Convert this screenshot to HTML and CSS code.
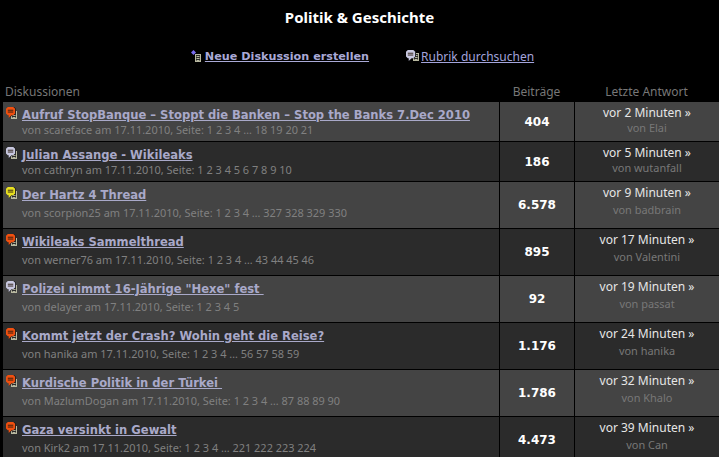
FILE: index.html
```html
<!DOCTYPE html>
<html lang="de">
<head>
    <meta charset="UTF-8">
    <title>Politik &amp; Geschichte</title>
    <link rel="stylesheet" href="styles.css">
</head>
<body>
<svg class="defs" width="0" height="0">
    <defs>
        <symbol id="doc" viewBox="0 0 6 8">
            <rect x="0.5" y="0.5" width="5" height="7" fill="#2a2a2a" stroke="#b8b8a0"/>
            <path d="M1.500 2.500h3M1.500 4.500h3M1.500 6.500h3" stroke="#b8b8a0"/>
        </symbol>
        <symbol id="bubble" viewBox="0 0 11 12">
            <path d="M3 0h6l2 2v5L9 9H7l-3 3V9H3L1 7V2z" fill="#1c1c1c"/>
            <path d="M2 0h6l2 2v5L8 9H6l-3 3V9H2L0 7V2z" fill="currentColor"/>
            <path d="M2 3.500h6M2 5.500h6" stroke="#2a1a10"/>
        </symbol>
    </defs>
</svg>

<h1 class="title">Politik &amp; Geschichte</h1>

<div class="actions">
    <div class="action">
        <svg class="action-icon" width="15" height="15" viewBox="0 0 15 15">
            <path d="M3.500 1L6 3.500 3.500 6 1 3.500z" fill="#7a6cf0"/>
            <use href="#doc" x="5" y="5" width="6" height="8"/>
        </svg>
        <a class="action-link new" href="#">Neue Diskussion erstellen</a>
    </div>
    <div class="action">
        <svg class="action-icon" width="15" height="15" viewBox="0 0 15 15">
            <use href="#doc" x="7" y="4" width="6" height="8"/>
            <use class="grey" href="#bubble" x="0" y="1" width="10" height="11"/>
        </svg>
        <a class="action-link" href="#">Rubrik durchsuchen</a>
    </div>
</div>

<table class="threads">
    <thead>
        <tr>
            <th class="col-topic">Diskussionen</th>
            <th class="col-posts">Beiträge</th>
            <th class="col-last">Letzte Antwort</th>
        </tr>
    </thead>
    <tbody>
        <tr class="short">
            <td class="topic"><div class="topic-wrap"><svg class="ticon" width="17" height="15"><use href="#doc" x="6" y="4" width="6" height="8"/><use class="hot" href="#bubble" x="1" width="10" height="11"/></svg><div><a class="thread" href="#">Aufruf StopBanque – Stoppt die Banken – Stop the Banks 7.Dec 2010</a><div class="meta">von scareface am 17.11.2010, Seite: 1 2 3 4 … 18 19 20 21</div></div></div></td>
            <td class="posts">404</td>
            <td class="last"><a href="#">vor 2 Minuten »</a><div class="by">von Elai</div></td>
        </tr>
        <tr class="short">
            <td class="topic"><div class="topic-wrap"><svg class="ticon" width="17" height="15"><use href="#doc" x="6" y="4" width="6" height="8"/><use class="grey" href="#bubble" x="1" width="10" height="11"/></svg><div><a class="thread" href="#">Julian Assange - Wikileaks</a><div class="meta">von cathryn am 17.11.2010, Seite: 1 2 3 4 5 6 7 8 9 10</div></div></div></td>
            <td class="posts">186</td>
            <td class="last"><a href="#">vor 5 Minuten »</a><div class="by">von wutanfall</div></td>
        </tr>
        <tr>
            <td class="topic"><div class="topic-wrap"><svg class="ticon" width="17" height="15"><use href="#doc" x="6" y="4" width="6" height="8"/><use class="warm" href="#bubble" x="1" width="10" height="11"/></svg><div><a class="thread" href="#">Der Hartz 4 Thread</a><div class="meta">von scorpion25 am 17.11.2010, Seite: 1 2 3 4 … 327 328 329 330</div></div></div></td>
            <td class="posts">6.578</td>
            <td class="last"><a href="#">vor 9 Minuten »</a><div class="by">von badbrain</div></td>
        </tr>
        <tr>
            <td class="topic"><div class="topic-wrap"><svg class="ticon" width="17" height="15"><use href="#doc" x="6" y="4" width="6" height="8"/><use class="hot" href="#bubble" x="1" width="10" height="11"/></svg><div><a class="thread" href="#">Wikileaks Sammelthread</a><div class="meta">von werner76 am 17.11.2010, Seite: 1 2 3 4 … 43 44 45 46</div></div></div></td>
            <td class="posts">895</td>
            <td class="last"><a href="#">vor 17 Minuten »</a><div class="by">von Valentini</div></td>
        </tr>
        <tr>
            <td class="topic"><div class="topic-wrap"><svg class="ticon" width="17" height="15"><use href="#doc" x="6" y="4" width="6" height="8"/><use class="grey" href="#bubble" x="1" width="10" height="11"/></svg><div><a class="thread" href="#">Polizei nimmt 16-Jährige "Hexe" fest&nbsp;</a><div class="meta">von delayer am 17.11.2010, Seite: 1 2 3 4 5</div></div></div></td>
            <td class="posts">92</td>
            <td class="last"><a href="#">vor 19 Minuten »</a><div class="by">von passat</div></td>
        </tr>
        <tr>
            <td class="topic"><div class="topic-wrap"><svg class="ticon" width="17" height="15"><use href="#doc" x="6" y="4" width="6" height="8"/><use class="hot" href="#bubble" x="1" width="10" height="11"/></svg><div><a class="thread" href="#">Kommt jetzt der Crash? Wohin geht die Reise?</a><div class="meta">von hanika am 17.11.2010, Seite: 1 2 3 4 … 56 57 58 59</div></div></div></td>
            <td class="posts">1.176</td>
            <td class="last"><a href="#">vor 24 Minuten »</a><div class="by">von hanika</div></td>
        </tr>
        <tr>
            <td class="topic"><div class="topic-wrap"><svg class="ticon" width="17" height="15"><use href="#doc" x="6" y="4" width="6" height="8"/><use class="hot" href="#bubble" x="1" width="10" height="11"/></svg><div><a class="thread" href="#">Kurdische Politik in der Türkei&nbsp;</a><div class="meta">von MazlumDogan am 17.11.2010, Seite: 1 2 3 4 … 87 88 89 90</div></div></div></td>
            <td class="posts">1.786</td>
            <td class="last"><a href="#">vor 32 Minuten »</a><div class="by">von Khalo</div></td>
        </tr>
        <tr>
            <td class="topic"><div class="topic-wrap"><svg class="ticon" width="17" height="15"><use href="#doc" x="6" y="4" width="6" height="8"/><use class="hot" href="#bubble" x="1" width="10" height="11"/></svg><div><a class="thread" href="#">Gaza versinkt in Gewalt</a><div class="meta">von Kirk2 am 17.11.2010, Seite: 1 2 3 4 … 221 222 223 224</div></div></div></td>
            <td class="posts">4.473</td>
            <td class="last"><a href="#">vor 39 Minuten »</a><div class="by">von Can</div></td>
        </tr>
    </tbody>
</table>
</body>
</html>
```

FILE: styles.css
```css
html, body {
    height: 457px;
    overflow: hidden;
}

body {
    margin: 0;
    background: #000;
    color: #fff;
    font-family: "Noto Sans", sans-serif;
    font-size: 12px;
}

.defs {
    display: block;
    height: 0;
}

.title {
    margin: 0;
    padding-top: 8px;
    height: 38px;
    box-sizing: border-box;
    text-align: center;
    font-size: 15px;
    font-weight: bold;
    line-height: 18px;
}

.actions {
    display: flex;
    justify-content: center;
    gap: 37px;
    padding: 11px 0 0 5px;
    height: 36px;
    box-sizing: border-box;
}

.action {
    display: flex;
    align-items: flex-start;
}

.action-link {
    color: #a4a4dc;
    font-size: 12px;
    line-height: 16px;
}

.action-link.new {
    color: #a9a9d6;
    font-family: "DejaVu Sans", sans-serif;
    font-size: 11.2px;
    font-weight: bold;
}

.threads {
    width: 716px;
    margin-left: 3px;
    border-collapse: separate;
    border-spacing: 0;
    table-layout: fixed;
}

.threads th {
    height: 28px;
    padding: 6px 0 0;
    box-sizing: border-box;
    font-size: 12px;
    font-weight: normal;
    color: #777;
}

.col-topic {
    width: 496px;
    text-align: left;
    padding-left: 2px !important;
}

.col-posts {
    width: 75px;
}

.threads td {
    height: 46px;
    padding: 0;
    border-bottom: 1px solid #000;
    background: #2b2b2b;
    vertical-align: top;
}

.threads tbody tr:nth-child(odd) td {
    background: #444;
}

.threads tr.short td {
    height: 39px;
}

.threads td + td {
    border-left: 1px solid #000;
}

.topic-wrap {
    display: flex;
    align-items: flex-start;
    padding: 5px 0 0 2px;
}

.ticon {
    flex: none;
}

.thread {
    display: block;
    font-family: "DejaVu Sans", sans-serif;
    font-size: 11.55px;
    font-weight: bold;
    line-height: 16px;
    color: #a9a9c9;
}

.meta {
    margin-top: 3px;
    font-size: 10.95px;
    line-height: 14px;
    color: #808080;
}

.short .meta {
    margin-top: 0;
}

.posts {
    text-align: center;
    font-family: "DejaVu Sans", sans-serif;
    font-size: 12px;
    font-weight: bold;
    vertical-align: middle !important;
}

.last {
    text-align: center;
}

.last a {
    display: block;
    margin-top: 3px;
    line-height: 16px;
    color: #e6e6e6;
    text-decoration: none;
}

.by {
    margin-top: 2px;
    font-size: 10.95px;
    line-height: 14px;
    color: #787878;
}

.short .by {
    margin-top: 0;
}

.hot {
    color: #f05010;
}

.warm {
    color: #e8e020;
}

.grey {
    color: #c8c8e0;
}
```
